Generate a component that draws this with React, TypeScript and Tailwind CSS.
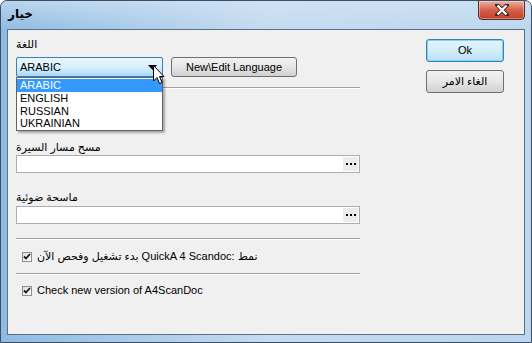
import React from 'react';

const FONT = { fontFamily: '"Liberation Sans", "DejaVu Sans", sans-serif' };

function Separator({ className = '' }: { className?: string }) {
  return <div className={`h-[2px] border-t border-[#a0a0a0] border-b border-b-white ${className}`} />;
}

function PathField({ className = '' }: { className?: string }) {
  return (
    <div className={`h-[18px] border border-[#abadb3] bg-white flex justify-end items-stretch p-[1px] ${className}`}>
      <div className="w-[15px] bg-[#ececec] flex items-center justify-center gap-[2px]">
        <span className="w-[2px] h-[2px] bg-black" />
        <span className="w-[2px] h-[2px] bg-black" />
        <span className="w-[2px] h-[2px] bg-black" />
      </div>
    </div>
  );
}

function Check({ children }: { children: React.ReactNode }) {
  return (
    <div className="flex items-center h-[13px] pl-[6px] gap-[5px]">
      <div className="w-[10px] h-[10px] border border-[#8e8f8f] bg-gradient-to-br from-[#dcdcdc] to-white flex items-center justify-center">
        <svg width="8" height="7" viewBox="0 0 8 7">
          <path d="M1 3.5 L3 5.5 L7 1" stroke="#1b1b1b" strokeWidth="1.8" fill="none" />
        </svg>
      </div>
      <div className="whitespace-nowrap">{children}</div>
    </div>
  );
}

export default function App() {
  return (
    <div className="w-[532px] h-[343px] relative overflow-hidden bg-white text-[11px] leading-[13px] text-black" style={FONT}>
      <div className="w-full h-full flex flex-col rounded-t-[7px] border border-[#3a4e66] bg-gradient-to-r from-[#8fbbe2] via-[#c5dbf0] to-[#bcd6ef] overflow-hidden">
        {/* title bar */}
        <div className="h-[28px] flex items-start relative bg-gradient-to-b from-[#d6e6f5]/60 to-transparent">
          <div className="pl-[7px] pt-[7px] text-[12px] font-bold text-black" dir="rtl">خيار</div>
          <div className="absolute right-[6px] top-[-1px] w-[47px] h-[20px] rounded-b-[4px] border border-[#5d2b24] bg-gradient-to-b from-[#eab0a4] via-[#d6604a] to-[#c23e27] flex items-center justify-center shadow-[inset_0_0_0_1px_rgba(255,255,255,0.35)]">
            <svg width="14" height="12" viewBox="0 0 14 12">
              <path d="M2 1 L12 11 M12 1 L2 11" stroke="#3d2a2a" strokeWidth="4" strokeLinecap="square" />
              <path d="M2.5 1.5 L11.5 10.5 M11.5 1.5 L2.5 10.5" stroke="#ffffff" strokeWidth="2.2" />
            </svg>
          </div>
        </div>
        {/* client */}
        <div className="flex-1 flex px-[6px] pb-[7px]">
          <div className="flex-1 border border-[#5b6f85] bg-[#f0f0f0] flex">
            <div className="w-[344px] ml-[8px] flex flex-col relative">
              <div className="mt-[8px]" dir="rtl" style={{ textAlign: 'left' }}>اللغة</div>
              <div className="mt-[6px] flex items-start gap-[8px] relative">
                <div className="w-[147px] h-[20px] rounded-[2px] border border-[#3c7fb1] bg-gradient-to-b from-[#eaf6fd] via-[#d9f0fc] to-[#a7d9f5] flex items-center pl-[3px] relative">
                  <span>ARABIC</span>
                  <svg className="absolute right-[5px] top-[7px]" width="9" height="5" viewBox="0 0 9 5">
                    <path d="M0 0 H9 L4.5 5 Z" fill="#000" />
                  </svg>
                </div>
                <div className="w-[126px] h-[20px] rounded-[3px] border border-[#707070] bg-gradient-to-b from-[#f2f2f2] via-[#e6e6e6] to-[#d0d0d0] flex items-center justify-center">
                  New\Edit Language
                </div>
                {/* dropdown list */}
                <div className="absolute left-0 top-[20px] w-[147px] h-[54px] bg-white border border-[#646464] shadow-[2px_2px_2px_rgba(0,0,0,0.3)] flex flex-col pt-[1px] z-10">
                  <div className="h-[13px] bg-[#3399ff] text-white pl-[3px]">ARABIC</div>
                  <div className="h-[13px] pl-[3px]">ENGLISH</div>
                  <div className="h-[12px] pl-[3px]">RUSSIAN</div>
                  <div className="h-[13px] pl-[3px]">UKRAINIAN</div>
                </div>
                {/* mouse cursor */}
                <svg className="absolute left-[137px] top-[8px] z-20" width="12" height="20" viewBox="0 0 12 20">
                  <path d="M0.5 0.5 L0.5 16 L4 12.5 L6.5 18.5 L9 17.5 L6.5 11.5 L11 11.5 Z" fill="#fff" stroke="#000" strokeWidth="1" />
                </svg>
              </div>
              <Separator className="mt-[10px]" />
              <div className="mt-[52px]" dir="rtl" style={{ textAlign: 'left' }}>مسح مسار السيرة</div>
              <PathField className="mt-[1px]" />
              <div className="mt-[18px]" dir="rtl" style={{ textAlign: 'left' }}>ماسحة ضوئية</div>
              <PathField className="mt-[2px]" />
              <Separator className="mt-[14px]" />
              <div className="mt-[10px]">
                <Check>
                  <span dir="rtl">بدء تشغيل وفحص الآن</span>
                  <span>{'  QuickA 4 Scandoc: '}</span>
                  <span dir="rtl">نمط</span>
                </Check>
              </div>
              <Separator className="mt-[10px]" />
              <div className="mt-[9px]">
                <Check>Check new version of A4ScanDoc</Check>
              </div>
            </div>
            <div className="ml-auto mr-[20px] mt-[9px] flex flex-col gap-[8px] w-[78px]">
              <div className="h-[23px] rounded-[3px] border border-[#3c7fb1] bg-gradient-to-b from-[#e5f4fc] via-[#d4edfa] to-[#b9e0f5] shadow-[inset_0_0_0_1px_#7fd3f7] flex items-center justify-center">
                Ok
              </div>
              <div className="h-[23px] rounded-[3px] border border-[#707070] bg-gradient-to-b from-[#f2f2f2] via-[#e6e6e6] to-[#d0d0d0] flex items-center justify-center" dir="rtl">
                الغاء الامر
              </div>
            </div>
          </div>
        </div>
      </div>
    </div>
  );
}
